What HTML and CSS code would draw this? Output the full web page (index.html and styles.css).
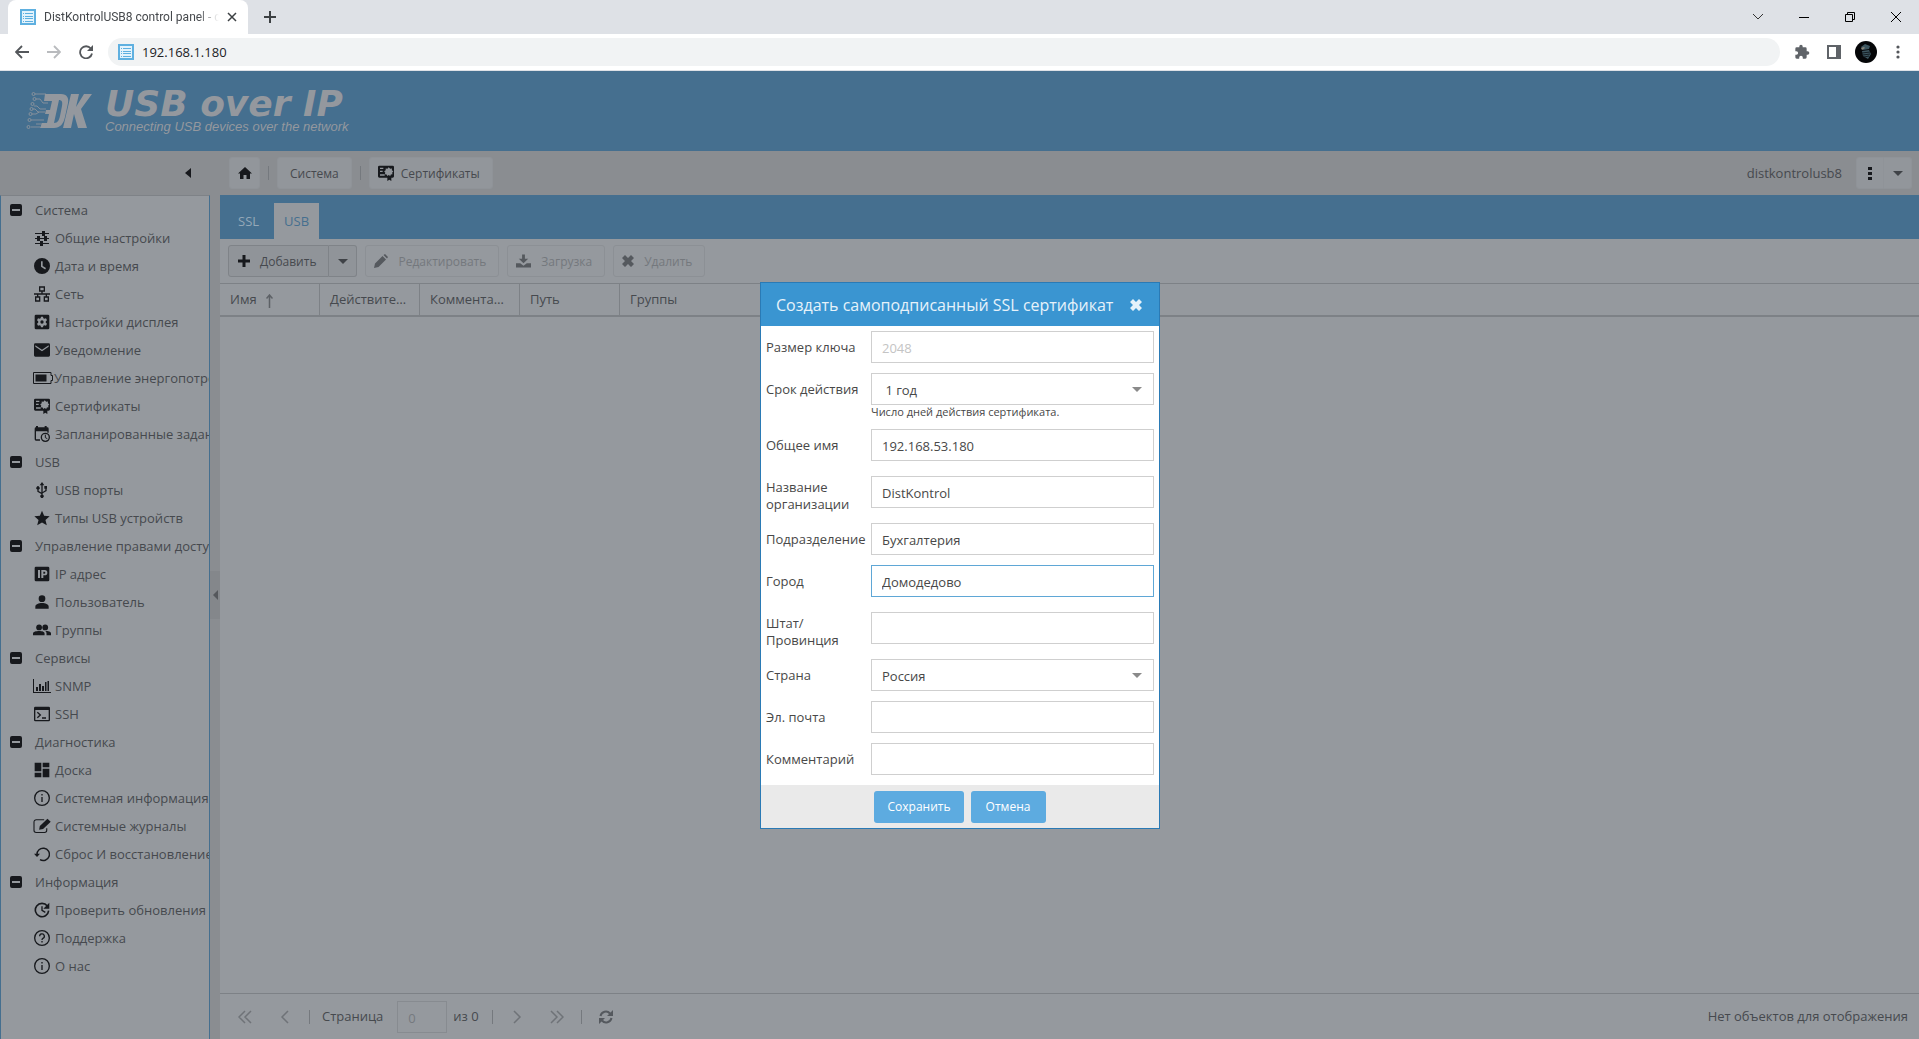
FILE: index.html
```html
<!DOCTYPE html>
<html lang="ru">
<head>
<meta charset="utf-8">
<title>DistKontrolUSB8 control panel</title>
<link rel="stylesheet" href="styles.css">
</head>
<body>
<svg class="sprite" aria-hidden="true">
  <symbol id="i-favicon" viewBox="0 0 16 16"><path fill="#5fb0e0" d="M0 0h16v16H0z"/><path fill="#e4f3fc" d="M2 2h12v12H2z"/><path fill="#5fb0e0" d="M3 4h1v1H3zM5 4h8v1H5zM3 7h1v1H3zM5 7h8v1H5zM3 9h1v1H3zM5 9h8v1H5zM3 12h1v1H3zM5 12h8v1H5z"/></symbol>
  <symbol id="i-tune" viewBox="0 0 16 16"><path d="M1 3h7V1h3v2h4v1h-4v2H8V4H1zM1 8h2V6h3v2h4V6h3v2h2v1h-2v2h-3V9H6v2H3V9H1zM1 13h5v-2h3v2h6v1H9v2H6v-2H1z"/></symbol>
  <symbol id="i-clock" viewBox="0 0 24 24"><path fill-rule="evenodd" d="M12 0a12 12 0 1 0 0 24a12 12 0 0 0 0-24zM10.500 5h2.500v7l5 3-1.200 2.200-6.300-4z"/></symbol>
  <symbol id="i-net" viewBox="0 0 24 24"><path fill="none" stroke="currentColor" stroke-width="2" d="M8.500 1.500h7v6h-7zM2.500 16.500h6v6h-6zM15.500 16.500h6v6h-6zM12 8v4M0 12h24M5.500 12v4M18.500 12v4"/></symbol>
  <symbol id="i-gearbox" viewBox="0 0 24 24"><path fill-rule="evenodd" d="M3 1h18a2 2 0 0 1 2 2v18a2 2 0 0 1-2 2H3a2 2 0 0 1-2-2V3a2 2 0 0 1 2-2zM10.500 4l-.5 2.300-1.700 1L6 6.500 4.500 9.200l1.800 1.700v2.200L4.500 14.800 6 17.500l2.300-.8 1.700 1 .5 2.300h3l.5-2.300 1.700-1 2.300.8 1.500-2.700-1.800-1.700v-2.200l1.800-1.700L18 6.500l-2.300.8-1.700-1-.5-2.300zM12 9.500a2.500 2.500 0 1 1 0 5a2.500 2.500 0 0 1 0-5z"/></symbol>
  <symbol id="i-mail" viewBox="0 0 24 24"><path fill-rule="evenodd" d="M2 2h20a2 2 0 0 1 2 2v16a2 2 0 0 1-2 2H2a2 2 0 0 1-2-2V4a2 2 0 0 1 2-2zM2 5v2l10 7 10-7V5l-10 6.500z"/></symbol>
  <symbol id="i-battery" viewBox="0 0 20 12"><path fill="none" stroke="currentColor" d="M.5.5h17.500v3h1.500v5H18v3H.5z"/><path d="M2.500 2.500h11v7h-11z"/></symbol>
  <symbol id="i-cert" viewBox="0 0 24 24"><path fill-rule="evenodd" d="M2 1h20a2 2 0 0 1 2 2v14a2 2 0 0 1-2 2h-2v5l-3-2-3 2v-5H2a2 2 0 0 1-2-2V3a2 2 0 0 1 2-2zM3 4v2h5V4zM3 8.500v2h4v-2zM3 14v2h7v-2zM16 3.500l-1.800 2-2.700-.4.1 2.700-2.300 1.500L11 11.500l-.8 2.500 2.700.2 1.300 2.300L16 15l2.300 1.500 1-2.300 2.500-.2-.6-2.500 1.800-2.200-2.200-1.500.2-2.700-2.700.4z"/></symbol>
  <symbol id="i-sched" viewBox="0 0 24 24"><path d="M3 2V0h3v2h10V0h3v2h1a2 2 0 0 1 2 2v6h-2V8H3v12h6v2H3a2 2 0 0 1-2-2V4a2 2 0 0 1 2-2z"/><circle cx="17" cy="17" r="6" fill="none" stroke="currentColor" stroke-width="2"/><path fill="none" stroke="currentColor" stroke-width="1.500" d="M17 13v4.500l3 1.500"/></symbol>
  <symbol id="i-usb" viewBox="0 0 24 24"><path d="M12 0l3.500 5H13v10l4-2.500V10h-1.500V6h4v4H19v3.500L13 17v2.200a2.500 2.500 0 1 1-2 0V18l-6-3.500V11.200a2.500 2.500 0 1 1 2 0v2.300l4 2.300V5H8.500z"/></symbol>
  <symbol id="i-star" viewBox="0 0 24 24"><path d="M12 1l3.200 7.800 8.300.7-6.300 5.400 2 8.100L12 18.700 4.800 23l2-8.100L.5 9.500l8.300-.7z"/></symbol>
  <symbol id="i-ip" viewBox="0 0 24 24"><path fill-rule="evenodd" d="M3 1h18a2 2 0 0 1 2 2v18a2 2 0 0 1-2 2H3a2 2 0 0 1-2-2V3a2 2 0 0 1 2-2zM6 6v12h3V6zM11 6v12h3v-4h2a4 4 0 0 0 0-8zM14 8.500h1.500a1.500 1.500 0 0 1 0 3H14z"/></symbol>
  <symbol id="i-user" viewBox="0 0 24 24"><circle cx="12" cy="7" r="5"/><path d="M2 22v-3c0-3.500 5-5.500 10-5.500s10 2 10 5.500v3z"/></symbol>
  <symbol id="i-group" viewBox="0 0 28 24"><circle cx="9.500" cy="8" r="4.500"/><circle cx="19" cy="8" r="4.500"/><path d="M0 20v-2.500C0 14.500 5 13.500 9.500 13.500s8.500 1 8.500 4V20zM19 13.600c1.500 1 2 2.200 2 3.900V20h7v-2.500c0-3-4.500-3.900-9-3.900z"/></symbol>
  <symbol id="i-chart" viewBox="0 0 18 14"><path d="M0 0h1v13h17v1H0zM3 8h2v4H3zM6 5h2v7H6zM9 7h2v5H9zM12 3h1.500v9H12zM14.500 2h1.500v10h-1.500z"/></symbol>
  <symbol id="i-term" viewBox="0 0 24 24"><path fill-rule="evenodd" d="M2 1h20a2 2 0 0 1 2 2v18a2 2 0 0 1-2 2H2a2 2 0 0 1-2-2V3a2 2 0 0 1 2-2zM2 6v15h20V6z"/><path fill="none" stroke="currentColor" stroke-width="2" d="M5 9.500l4.500 4L5 17.500M12 18h6"/></symbol>
  <symbol id="i-dash" viewBox="0 0 24 24"><path d="M1 1h10v13H1zM13 1h10v7H13zM13 10h10v13H13zM1 16h10v7H1z"/></symbol>
  <symbol id="i-info" viewBox="0 0 24 24"><circle cx="12" cy="12" r="11" fill="none" stroke="currentColor" stroke-width="2"/><path d="M11 6h2v2.200h-2zM11 10.500h2V18h-2z"/></symbol>
  <symbol id="i-edit" viewBox="0 0 24 22"><path fill="none" stroke="currentColor" stroke-width="1.500" d="M15 2.500H4a3 3 0 0 0-3 3V17a3 3 0 0 0 3 3h11.500a3 3 0 0 0 3-3v-3"/><path d="M8 16l1-5L19.500 1 24 5.200 13.500 15z"/></symbol>
  <symbol id="i-restore" viewBox="0 0 24 24"><path fill="none" stroke="currentColor" stroke-width="2.200" d="M4.500 13A9.300 9.300 0 1 1 9 20.500"/><path d="M0 11.500h9l-4.500 5z"/></symbol>
  <symbol id="i-update" viewBox="0 0 24 24"><path fill="none" stroke="currentColor" stroke-width="2.400" d="M20 6a10 10 0 1 0 2 7"/><path d="M23 1v9h-9z"/><path fill="none" stroke="currentColor" stroke-width="2" d="M12 6.500v6l5 3"/></symbol>
  <symbol id="i-help" viewBox="0 0 24 24"><circle cx="12" cy="12" r="11" fill="none" stroke="currentColor" stroke-width="2"/><path fill="none" stroke="currentColor" stroke-width="2" d="M8.500 9.500a3.500 3.500 0 1 1 5 3c-1 .8-1.500 1.300-1.500 2.500"/><path d="M11 16.500h2v2.200h-2z"/></symbol>
  <symbol id="i-minus" viewBox="0 0 12 12"><path fill-rule="evenodd" d="M2 0h8a2 2 0 0 1 2 2v8a2 2 0 0 1-2 2H2a2 2 0 0 1-2-2V2a2 2 0 0 1 2-2zM2 5v2h8V5z"/></symbol>
  <symbol id="i-home" viewBox="0 0 14 12"><path d="M7 0l7 6.500h-2V12H8.500V8h-3v4H2V6.500H0z"/></symbol>
  <symbol id="i-plus" viewBox="0 0 12 12"><path d="M4.500 0h3v4.500H12v3H7.500V12h-3V7.500H0v-3h4.500z"/></symbol>
  <symbol id="i-pencil" viewBox="0 0 14 14"><path d="M0 14l1-4.500L8.500 2 12 5.500 4.500 13zM9.500 1L11 0l3 3-1 1.500z"/></symbol>
  <symbol id="i-download" viewBox="0 0 16 14"><path d="M6.500 0h3v4.500H13L8 9.500 3 4.500h3.500zM0 9.500h4.500L8 12l3.500-2.500H16V14H0z"/></symbol>
  <symbol id="i-x" viewBox="0 0 12 12"><path d="M3 0l3 3 3-3 3 3-3 3 3 3-3 3-3-3-3 3-3-3 3-3-3-3z"/></symbol>
  <symbol id="i-first" viewBox="0 0 14 14"><path fill="none" stroke="currentColor" stroke-width="1.500" d="M7 1L1 7l6 6M13 1L7 7l6 6"/></symbol>
  <symbol id="i-prev" viewBox="0 0 14 14"><path fill="none" stroke="currentColor" stroke-width="1.500" d="M10 1L4 7l6 6"/></symbol>
  <symbol id="i-refresh" viewBox="0 0 14 14"><path fill="none" stroke="currentColor" stroke-width="2" d="M1.500 6A5.500 5.500 0 0 1 11 3.500M12.500 8A5.500 5.500 0 0 1 3 10.500"/><path d="M14 0v6H8zM0 14V8h6z"/></symbol>
</svg>

<header class="browser">
  <div class="tabstrip">
    <div class="browser-tab">
      <svg class="ico16"><use href="#i-favicon"/></svg>
      <span class="tab-title">DistKontrolUSB8 control panel - disk</span>
      <button class="plain" aria-label="Close tab"><svg width="10" height="10" viewBox="0 0 10 10"><path d="M1 1l8 8M9 1L1 9" stroke="#3c4043" stroke-width="1.500"/></svg></button>
    </div>
    <button class="plain new-tab" aria-label="New tab"><svg width="12" height="12" viewBox="0 0 12 12"><path d="M6 0v12M0 6h12" stroke="#3c4043" stroke-width="2"/></svg></button>
    <div class="window-buttons">
      <button class="plain" aria-label="Search tabs"><svg width="12" height="8" viewBox="0 0 12 8"><path d="M1 1l5 5 5-5" fill="none" stroke="#333"/></svg></button>
      <button class="plain" aria-label="Minimize"><svg width="10" height="10" viewBox="0 0 10 10"><path d="M0 5.500h10" stroke="#000"/></svg></button>
      <button class="plain" aria-label="Restore"><svg width="10" height="10" viewBox="0 0 10 10"><path d="M.5 2.500h7v7h-7zM2.500 2.500v-2h7v7h-2" fill="none" stroke="#000"/></svg></button>
      <button class="plain" aria-label="Close"><svg width="10" height="10" viewBox="0 0 10 10"><path d="M0 0l10 10M10 0L0 10" stroke="#000"/></svg></button>
    </div>
  </div>
  <div class="navbar">
    <button class="plain" aria-label="Back"><svg width="14" height="14" viewBox="0 0 14 14"><path d="M14 7H1M7 1L1 7l6 6" fill="none" stroke="#54575b" stroke-width="1.800"/></svg></button>
    <button class="plain" aria-label="Forward"><svg width="14" height="14" viewBox="0 0 14 14"><path d="M0 7h13M7 1l6 6-6 6" fill="none" stroke="#b9bbbe" stroke-width="1.800"/></svg></button>
    <button class="plain" aria-label="Reload"><svg width="14" height="14" viewBox="0 0 14 14"><path d="M11.800 3.500A6 6 0 1 0 13 8.500" fill="none" stroke="#54575b" stroke-width="1.800"/><path d="M14 0v6H8z" fill="#54575b"/></svg></button>
    <label class="address"><svg class="ico16"><use href="#i-favicon"/></svg><input type="text" value="192.168.1.180" aria-label="Address"></label>
    <div class="nav-tools">
      <button class="plain" aria-label="Extensions"><svg width="16" height="16" viewBox="0 0 24 24"><path fill="#5f6368" d="M20.500 11H19V7a2 2 0 0 0-2-2h-4V3.500a2.500 2.500 0 0 0-5 0V5H4a2 2 0 0 0-2 2v3.800h1.500a2.700 2.700 0 0 1 0 5.400H2V20a2 2 0 0 0 2 2h3.800v-1.500a2.700 2.700 0 0 1 5.400 0V22H17a2 2 0 0 0 2-2v-4h1.500a2.500 2.500 0 0 0 0-5z"/></svg></button>
      <button class="plain" aria-label="Side panel"><svg width="14" height="14" viewBox="0 0 14 14"><path fill="#5f6368" fill-rule="evenodd" d="M0 0h14v14H0zM2 2v10h7V2z"/></svg></button>
      <button class="plain" aria-label="Profile"><svg width="22" height="22" viewBox="0 0 22 22"><circle cx="11" cy="11" r="11" fill="#050608"/><path fill="#3d5660" d="M6 6l4-3 5 2-1 3-6 1zM7 10l7-1 2 4-3 5-5-3z"/><path fill="#8a8478" d="M6 7l3-1 1 1-3 2z"/><path stroke="#131c22" d="M7 12l8-1M8 14l7-1M9 16l5-1"/></svg></button>
      <button class="plain" aria-label="Menu"><svg width="4" height="14" viewBox="0 0 4 14"><g fill="#54575b"><circle cx="2" cy="2" r="1.600"/><circle cx="2" cy="7" r="1.600"/><circle cx="2" cy="12" r="1.600"/></g></svg></button>
    </div>
  </div>
</header>

<div class="app">
  <header class="banner">
    <svg class="logo" viewBox="0 0 66 38" role="img" aria-label="DK">
      <g fill="none" stroke="currentColor" stroke-width=".8">
        <path d="M9 2h11M10 7h4l3 4h5M8 14h3l3 3h6M7 17h2l3 3h7M6 22h4l3-2M5 28h13M5 35h9M10 32h6"/>
        <circle cx="7.500" cy="2" r="1.500"/><circle cx="8.500" cy="7" r="1.500"/><circle cx="6.500" cy="12" r="1.500"/><circle cx="5.500" cy="17" r="1.500"/><circle cx="4.500" cy="22" r="1.500"/><circle cx="3.500" cy="28" r="1.500"/><circle cx="2.500" cy="35" r="1.500"/>
      </g>
      <path fill="currentColor" fill-rule="evenodd" d="M19 2h16c6 0 8 4 7 9l-3 14c-1.500 7-5 11-11 11H14l2-5h5l2-9h-4l1-4h4l2-9h-8zM33 8l-5 23c4 0 5-3 6-7l2-10c.8-4-.2-6-3-6z"/>
      <path fill="currentColor" d="M45 2h8l-3 13L58 2h8L55 17l6 19h-9l-4-14-3 14h-8z"/>
    </svg>
    <div class="brand"><span class="brand-name">USB over IP</span><span class="brand-sub">Connecting USB devices over the network</span></div>
  </header>

  <div class="workspace">
    <aside class="sidebar">
      <div class="side-head"><button class="plain" aria-label="Свернуть"><svg width="6" height="10" viewBox="0 0 6 10"><path d="M6 0v10L0 5z"/></svg></button></div>
      <nav class="tree">
        <button class="plain group"><svg><use href="#i-minus"/></svg>Система</button>
        <a href="#"><svg><use href="#i-tune"/></svg>Общие настройки</a>
        <a href="#"><svg><use href="#i-clock"/></svg>Дата и время</a>
        <a href="#"><svg><use href="#i-net"/></svg>Сеть</a>
        <a href="#"><svg><use href="#i-gearbox"/></svg>Настройки дисплея</a>
        <a href="#"><svg><use href="#i-mail"/></svg>Уведомление</a>
        <a href="#"><svg class="wide"><use href="#i-battery"/></svg>Управление энергопотреблением</a>
        <a href="#"><svg><use href="#i-cert"/></svg>Сертификаты</a>
        <a href="#"><svg><use href="#i-sched"/></svg>Запланированные задания</a>
        <button class="plain group"><svg><use href="#i-minus"/></svg>USB</button>
        <a href="#"><svg><use href="#i-usb"/></svg>USB порты</a>
        <a href="#"><svg><use href="#i-star"/></svg>Типы USB устройств</a>
        <button class="plain group"><svg><use href="#i-minus"/></svg>Управление правами доступа</button>
        <a href="#"><svg><use href="#i-ip"/></svg>IP адрес</a>
        <a href="#"><svg><use href="#i-user"/></svg>Пользователь</a>
        <a href="#"><svg class="mid"><use href="#i-group"/></svg>Группы</a>
        <button class="plain group"><svg><use href="#i-minus"/></svg>Сервисы</button>
        <a href="#"><svg class="mid"><use href="#i-chart"/></svg>SNMP</a>
        <a href="#"><svg><use href="#i-term"/></svg>SSH</a>
        <button class="plain group"><svg><use href="#i-minus"/></svg>Диагностика</button>
        <a href="#"><svg><use href="#i-dash"/></svg>Доска</a>
        <a href="#"><svg><use href="#i-info"/></svg>Системная информация</a>
        <a href="#"><svg class="mid"><use href="#i-edit"/></svg>Системные журналы</a>
        <a href="#"><svg><use href="#i-restore"/></svg>Сброс И восстановление</a>
        <button class="plain group"><svg><use href="#i-minus"/></svg>Информация</button>
        <a href="#"><svg><use href="#i-update"/></svg>Проверить обновления</a>
        <a href="#"><svg><use href="#i-help"/></svg>Поддержка</a>
        <a href="#"><svg><use href="#i-info"/></svg>О нас</a>
      </nav>
    </aside>
    <div class="splitter"><button class="plain" aria-label="Свернуть панель"><svg width="5" height="10" viewBox="0 0 5 10"><path d="M5 0v10L0 5z"/></svg></button></div>

    <main class="main">
      <div class="crumbs">
        <button class="btn home" aria-label="Домой"><svg width="14" height="12"><use href="#i-home"/></svg></button>
        <i class="sep"></i>
        <button class="btn">Система</button>
        <i class="sep"></i>
        <button class="btn with-icon"><svg width="16" height="16"><use href="#i-cert"/></svg>Сертификаты</button>
        <span class="host">distkontrolusb8</span>
        <div class="split">
          <button class="btn" aria-label="Меню"><svg width="4" height="14" viewBox="0 0 4 14"><path d="M0 1h4v3H0zM0 6h4v3H0zM0 11h4v3H0z"/></svg></button>
          <button class="btn" aria-label="Ещё"><span class="caret"></span></button>
        </div>
      </div>
      <div class="tabs"><a href="#">SSL</a><a href="#" class="active">USB</a></div>
      <div class="actions">
        <div class="split add">
          <button class="btn"><svg width="12" height="12"><use href="#i-plus"/></svg>Добавить</button>
          <button class="btn" aria-label="Ещё варианты"><span class="caret"></span></button>
        </div>
        <button class="btn" disabled><svg width="14" height="14"><use href="#i-pencil"/></svg>Редактировать</button>
        <button class="btn" disabled><svg width="15" height="14"><use href="#i-download"/></svg>Загрузка</button>
        <button class="btn" disabled><svg width="12" height="12"><use href="#i-x"/></svg>Удалить</button>
      </div>
      <div class="grid-area">
        <table class="grid">
          <thead><tr>
            <th>Имя<svg class="sort" width="7" height="14" viewBox="0 0 7 14"><path fill="none" stroke="currentColor" stroke-width="1.500" d="M3.500 14V1M.5 4.500l3-3.500 3 3.500"/></svg></th>
            <th>Действителен до</th><th>Комментарий</th><th>Путь</th><th>Группы</th><th aria-hidden="true"></th>
          </tr></thead>
        </table>
      </div>
      <footer class="pager">
        <button class="plain" aria-label="Первая"><svg width="14" height="14"><use href="#i-first"/></svg></button>
        <button class="plain" aria-label="Предыдущая"><svg width="14" height="14"><use href="#i-prev"/></svg></button>
        <i class="sep"></i>
        <label for="page">Страница</label>
        <input id="page" type="text" value="0" disabled>
        <span class="of">из 0</span>
        <i class="sep"></i>
        <button class="plain flip" aria-label="Следующая"><svg width="14" height="14"><use href="#i-prev"/></svg></button>
        <button class="plain flip" aria-label="Последняя"><svg width="14" height="14"><use href="#i-first"/></svg></button>
        <i class="sep"></i>
        <button class="plain reload" aria-label="Обновить"><svg width="14" height="14"><use href="#i-refresh"/></svg></button>
        <span class="empty">Нет объектов для отображения</span>
      </footer>
    </main>
  </div>

  <div class="overlay">
    <form class="dialog" role="dialog" aria-labelledby="dlg-title">
      <div class="dlg-head"><h1 id="dlg-title">Создать самоподписанный SSL сертификат</h1>
        <button type="button" class="plain" aria-label="Закрыть"><svg width="12" height="12"><use href="#i-x"/></svg></button></div>
      <div class="dlg-body">
        <div class="row"><label for="f1">Размер ключа</label><div class="field"><input id="f1" type="text" value="2048" disabled></div></div>
        <div class="row"><label for="f2">Срок действия</label><div class="field drop"><select id="f2"><option>&nbsp;1 год</option></select><small>Число дней действия сертификата.</small></div></div>
        <div class="row"><label for="f3">Общее имя</label><div class="field"><input id="f3" type="text" value="192.168.53.180"></div></div>
        <div class="row"><label for="f4">Название организации</label><div class="field"><input id="f4" type="text" value="DistKontrol"></div></div>
        <div class="row"><label for="f5">Подразделение</label><div class="field"><input id="f5" type="text" value="Бухгалтерия"></div></div>
        <div class="row"><label for="f6">Город</label><div class="field"><input id="f6" class="current" type="text" value="Домодедово"></div></div>
        <div class="row"><label for="f7">Штат/<br>Провинция</label><div class="field"><input id="f7" type="text"></div></div>
        <div class="row"><label for="f8">Страна</label><div class="field drop"><select id="f8"><option>Россия</option></select></div></div>
        <div class="row"><label for="f9">Эл. почта</label><div class="field"><input id="f9" type="text"></div></div>
        <div class="row"><label for="f10">Комментарий</label><div class="field"><input id="f10" type="text"></div></div>
      </div>
      <div class="dlg-foot"><button type="button">Сохранить</button><button type="button">Отмена</button></div>
    </form>
  </div>
</div>
</body>
</html>
```
FILE: styles.css
```css
* { box-sizing: border-box; }
body {
  margin: 0;
  height: 100vh;
  display: flex;
  flex-direction: column;
  overflow: hidden;
  font: 13px/17px "Open Sans", "Noto Sans", sans-serif;
  color: #46494e;
}
button, input, select { font: inherit; color: inherit; }
svg { display: block; flex: none; fill: currentColor; }
.sprite { display: none; }
a { color: inherit; text-decoration: none; }
.plain {
  border: 0;
  padding: 0;
  background: none;
  display: flex;
  align-items: center;
  justify-content: center;
}
.ico16 { width: 16px; height: 16px; }

/* Browser frame */
.browser { flex: none; border-bottom: 1px solid #dee1e6; background: #fff; }
.tabstrip { height: 34px; background: #dee1e6; display: flex; align-items: center; }
.browser-tab {
  width: 240px;
  height: 34px;
  margin-left: 8px;
  padding: 0 11px 0 12px;
  border-radius: 8px 8px 0 0;
  background: #fff;
  display: flex;
  align-items: center;
  gap: 8px;
}
.tab-title {
  flex: 1;
  overflow: hidden;
  white-space: nowrap;
  font: 12px/16px Roboto, sans-serif;
  color: #45484c;
  -webkit-mask-image: linear-gradient(to right, #000 88%, transparent);
  mask-image: linear-gradient(to right, #000 88%, transparent);
}
.new-tab { margin-left: 16px; }
.window-buttons { margin-left: auto; display: flex; height: 28px; }
.window-buttons button { width: 46px; }
.navbar { height: 36px; padding: 0 5px 0 6px; display: flex; align-items: center; }
.navbar > button { width: 32px; height: 32px; }
.address {
  flex: 1;
  height: 28px;
  margin-left: 6px;
  padding: 0 10px;
  border-radius: 14px;
  background: #f1f3f4;
  display: flex;
  align-items: center;
  gap: 8px;
}
.address input { flex: 1; border: 0; padding: 0; background: none; color: #202124; }
.nav-tools { display: flex; margin-left: 6px; }
.nav-tools button { width: 32px; height: 32px; }

/* Application */
.app { flex: 1; min-height: 0; display: flex; flex-direction: column; position: relative; background: #8a8d91; }
.banner {
  flex: none;
  height: 80px;
  padding: 0 26px;
  background: #456f8f;
  color: #94989e;
  display: flex;
  align-items: center;
  gap: 13px;
}
.logo { width: 66px; height: 38px; }
.brand { display: flex; flex-direction: column; white-space: nowrap; }
.brand-name { font: italic bold 36px/32px "DejaVu Sans", sans-serif; }
.brand-sub { font: italic 13px/14px "Liberation Sans", sans-serif; }

.workspace { flex: 1; min-height: 0; display: flex; }
.sidebar { flex: none; width: 210px; display: flex; flex-direction: column; }
.side-head { flex: none; height: 44px; padding-right: 19px; display: flex; align-items: center; justify-content: flex-end; color: #17191d; }
.tree {
  flex: 1;
  overflow: hidden;
  border: 1px solid #456f8f;
  border-top-color: #7e8287;
  border-bottom: 0;
  background: #95999e;
}
.tree a, .tree .group { height: 28px; width: 100%; display: flex; align-items: center; justify-content: flex-start; white-space: nowrap; }
.tree a { padding-left: 33px; gap: 5px; }
.tree a svg { width: 16px; height: 16px; color: #17191d; }
.tree a .wide { width: 20px; height: 12px; margin: 0 -4px 0 -1px; }
.tree a .mid { width: 18px; margin: 0 -1px; }
.tree .group { padding-left: 9px; gap: 13px; }
.tree .group svg { width: 12px; height: 12px; color: #17191d; }
.splitter { flex: none; width: 10px; display: flex; align-items: center; }
.splitter button { width: 10px; height: 48px; background: #84878b; color: #55585c; }

.main { flex: 1; min-width: 0; display: flex; flex-direction: column; }
.btn {
  height: 32px;
  padding: 0 12px;
  border: 1px solid #868a8f;
  border-radius: 3px;
  background: #92969b;
  font-size: 12px;
  display: flex;
  align-items: center;
  gap: 9px;
}
.btn svg { color: #17191d; }
.btn:disabled { border-color: #8c9095; background: #95999e; color: #74787d; }
.btn:disabled svg { color: #55595e; }
.sep { flex: none; width: 1px; height: 14px; background: #75797e; }
.caret { width: 0; height: 0; border: 5px solid transparent; border-top-color: #3f4247; border-bottom: 0; }
.split { display: flex; }
.split .btn:first-child { border-radius: 3px 0 0 3px; }
.split .btn:last-child { border-radius: 0 3px 3px 0; border-left: 0; padding: 0 8px; }

.crumbs { flex: none; height: 44px; padding: 0 7px 0 9px; display: flex; align-items: center; gap: 8px; }
.crumbs .btn { border-color: #8f9398; }
.crumbs .home { width: 31px; padding: 0; justify-content: center; }
.crumbs .with-icon { padding: 0 12px 0 8px; gap: 7px; }
.host { margin-left: auto; margin-right: 6px; }
.crumbs .split .btn { padding: 0 8px; justify-content: center; width: 28px; }

.tabs { flex: none; height: 44px; padding: 8px 8px 0; background: #456f8f; display: flex; gap: 5px; color: #94a8b8; }
.tabs a { padding: 10px 10px 0; font-size: 13px; }
.tabs .active { background: #95999e; color: #456f8f; }

.actions { flex: none; height: 44px; padding: 0 8px; background: #95999e; display: flex; align-items: center; gap: 8px; }
.actions .btn { padding: 0 12px 0 8px; gap: 10px; }
.actions .add .btn { padding-left: 9px; border-color: #7f8388; background: #909499; }
.actions .add .btn:last-child { width: 28px; padding: 0; justify-content: center; }

.grid-area { flex: 1; background: #95999e; border-top: 1px solid #7d8186; }
.grid { width: 100%; table-layout: fixed; border-collapse: separate; border-spacing: 0; }
.grid th {
  width: 100px;
  height: 33px;
  padding: 0 10px;
  border-right: 1px solid #7d8186;
  border-bottom: 2px solid #7d8186;
  text-align: left;
  font-weight: 400;
  overflow: hidden;
  white-space: nowrap;
  text-overflow: ellipsis;
}
.grid th:nth-child(5) { border-right: 0; }
.grid th:last-child { width: auto; border-right: 0; }
.sort { display: inline-block; margin-left: 9px; vertical-align: middle; color: #5d6166; }

.pager { flex: none; height: 46px; padding: 0 11px 0 5px; border-top: 1px solid #7d8186; background: #95999e; display: flex; align-items: center; }
.pager .plain { width: 40px; height: 32px; color: #6f7378; }
.pager .sep { margin: 0 4px; }
.pager label { margin: 0 14px 0 8px; }
.pager input { width: 50px; height: 32px; padding: 2px 10px 0; border: 1px solid #878b90; background: none; color: #75797e; }
.pager .of { margin: 0 9px 0 6px; }
.pager .reload { color: #55595e; }
.flip svg { transform: rotate(180deg); }
.empty { margin-left: auto; }

/* Dialog */
.overlay { position: absolute; inset: 0; padding: 1px 0 0 1px; display: flex; align-items: center; justify-content: center; }
.dialog { width: 400px; border: 1px solid #2a7ab5; background: #fff; color: #484848; }
.dlg-head { height: 43px; padding: 0 17px 0 15px; background: #3a95d1; color: #e6f2fa; display: flex; align-items: center; justify-content: space-between; }
.dlg-head h1 { margin: 0; font-size: 16px; line-height: 22px; font-weight: 400; white-space: nowrap; }
.dlg-body { padding: 5px 5px 10px; display: flex; flex-direction: column; gap: 10px; }
.row { display: flex; align-items: center; }
.row label { flex: none; align-self: flex-start; width: 105px; padding-top: 8px; }
.field { flex: 1; min-width: 0; position: relative; }
.field input, .field select {
  display: block;
  width: 100%;
  height: 32px;
  padding: 2px 10px 0;
  border: 1px solid #cfcfcf;
  border-radius: 0;
  background: #fff;
  appearance: none;
  outline: 0;
}
.field input:disabled { color: #c4c4c4; }
.field .current { border-color: #5fa7d6; }
.drop::after {
  content: "";
  position: absolute;
  top: 14px;
  right: 12px;
  border: 5px solid transparent;
  border-top-color: #8a8a8a;
  border-bottom: 0;
  pointer-events: none;
}
.field small { display: block; font-size: 11px; line-height: 14px; }
.dlg-foot { height: 43px; background: #eaeaea; display: flex; align-items: center; justify-content: center; gap: 7px; }
.dlg-foot button { height: 32px; min-width: 75px; padding: 0 13px; border: 0; border-radius: 3px; background: #5dabe0; color: #fff; font-size: 12px; }
```
